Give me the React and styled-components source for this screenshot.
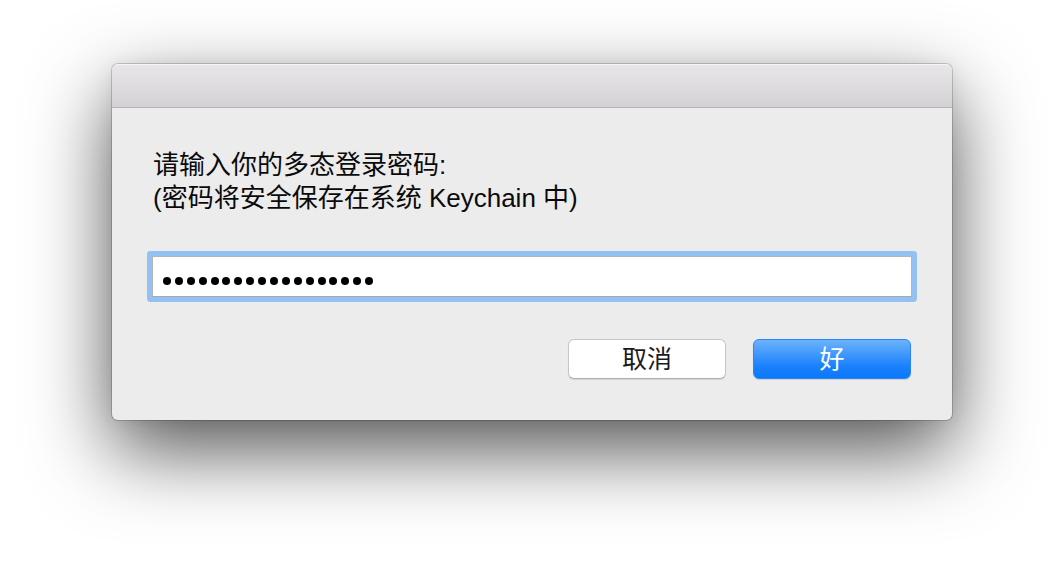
import React from 'react';
import styled, { createGlobalStyle } from 'styled-components';

const GlobalStyle = createGlobalStyle`
  html, body {
    margin: 0;
    padding: 0;
    background: #ffffff;
  }
  body {
    font-family: "Liberation Sans", "Noto Sans CJK SC", sans-serif;
    -webkit-font-smoothing: antialiased;
  }
`;

const Page = styled.div`
  width: 1064px;
  height: 580px;
  display: flex;
  justify-content: center;
  align-items: flex-start;
  padding-top: 64px;
  box-sizing: border-box;
  overflow: hidden;
`;

const Dialog = styled.div`
  width: 840px;
  border-radius: 6px;
  background: #ececec;
  overflow: hidden;
  box-shadow:
    0 0 0 1px rgba(0, 0, 0, 0.18),
    0 30px 80px rgba(0, 0, 0, 0.68),
    0 0 18px rgba(0, 0, 0, 0.06);
`;

const TitleBar = styled.div`
  height: 43px;
  background: linear-gradient(to bottom, #e9e7e9, #d3d1d3);
  border-bottom: 1px solid #b3b3b3;
  box-shadow: inset 0 1px 0 rgba(255, 255, 255, 0.6);
`;

const Body = styled.div`
  display: flex;
  flex-direction: column;
  padding: 41px 40px 41px;
`;

const Message = styled.p`
  margin: 0 0 0 1px;
  font-size: 26px;
  line-height: 33px;
  color: #0a0a0a;
`;

const Field = styled.div`
  margin: 41px 0 0 0;
  height: 41px;
  box-sizing: border-box;
  display: flex;
  align-items: center;
  gap: 3.9px;
  padding: 8px 0 0 10px;
  background: #ffffff;
  border: 1px solid #b4b4b4;
  border-bottom-color: #a8a8a8;
  border-radius: 1px;
  box-shadow: 0 0 0 5px #93c1f3;
`;

const Dot = styled.span`
  width: 8px;
  height: 8px;
  border-radius: 50%;
  background: #000;
  flex: none;
`;

const Actions = styled.div`
  margin-top: 42px;
  padding-right: 1px;
  display: flex;
  justify-content: flex-end;
  gap: 27px;
`;

const Button = styled.button`
  width: 158px;
  height: 40px;
  border-radius: 6px;
  font-family: "Liberation Sans", "Noto Sans CJK SC", sans-serif;
  font-size: 25px;
  line-height: 1;
  padding: 0;
  cursor: pointer;
  ${({ $primary }) =>
    $primary
      ? `
    color: #ffffff;
    border: 1px solid #2a86f5;
    background: linear-gradient(to bottom, #6cb3fb, #1a80fc 70%, #0b79fb);
    box-shadow: 0 1px 1px rgba(0, 0, 0, 0.12);
  `
      : `
    color: #1a1a1a;
    border: 1px solid #c6c6c6;
    border-bottom-color: #b0b0b0;
    background: #ffffff;
    box-shadow: 0 1px 1px rgba(0, 0, 0, 0.1);
  `}
`;

export default function App() {
  const dots = Array.from({ length: 18 });
  return (
    <>
      <GlobalStyle />
      <Page>
        <Dialog>
          <TitleBar />
          <Body>
            <Message>
              请输入你的多态登录密码:
              <br />
              (密码将安全保存在系统 Keychain 中)
            </Message>
            <Field>
              {dots.map((_, i) => (
                <Dot key={i} />
              ))}
            </Field>
            <Actions>
              <Button>取消</Button>
              <Button $primary>好</Button>
            </Actions>
          </Body>
        </Dialog>
      </Page>
    </>
  );
}
